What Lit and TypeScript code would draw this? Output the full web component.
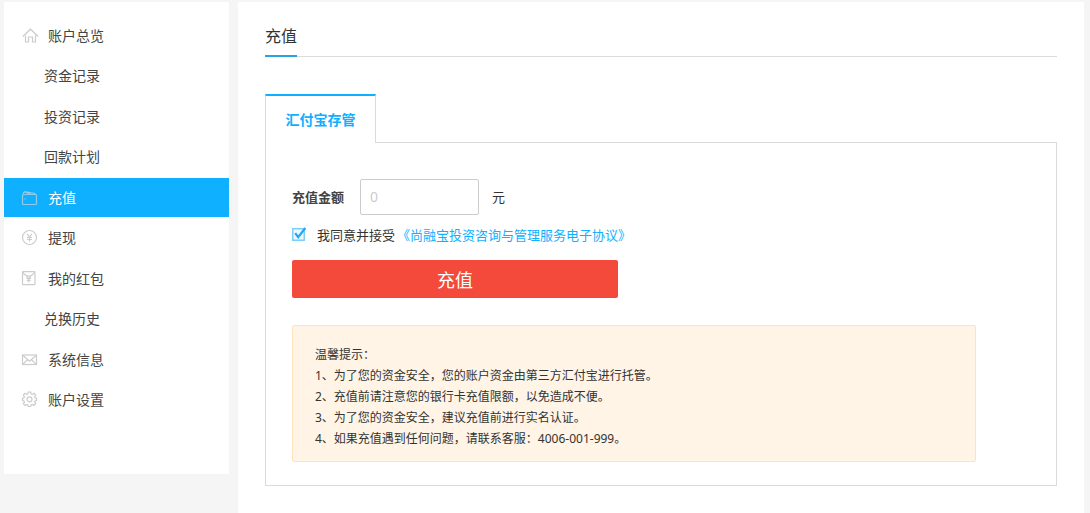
import { LitElement, html, css, svg, nothing } from "lit";
import { customElement, property, state } from "lit/decorators.js";
import { classMap } from "lit/directives/class-map.js";

const icons: Record<string, unknown> = {
  home: svg`<path d="M0.800 9.500 8.500 2.200 16.200 9.500"/><path d="M3.500 8.500v6.500h3v-5h4v5h3V8.500"/>`,
  wallet: svg`<rect x="0.500" y="5.500" width="14" height="10" rx="1"/><path d="M1.500 5.200V3.700l1.200-1L13 4.400v1M3 3.200l6 2"/><path d="M2.500 10h1.500"/>`,
  yuan: svg`<circle cx="7.500" cy="8.500" r="7"/><path d="M5.200 4.800 7.500 8 9.800 4.800M7.500 8v4.600M5 8.500h5M5 10.500h5"/>`,
  packet: svg`<rect x="0.500" y="1.700" width="12.500" height="13" rx="0.800"/><path d="M1 2.200c1.200 2.600 3 3.800 5.700 3.800s4.500-1.200 5.700-3.800M4.600 6.500l2.100 2.200 2.100-2.200M6.700 8.700v3.800M4.500 8.700h4.400M4.700 10.500h4"/>`,
  mail: svg`<rect x="0.500" y="4" width="14" height="9.500"/><path d="M1 4.500l6.500 5.800L14 4.500M1 13.100l4.400-4.300M14 13.100 9.600 8.800"/>`,
  gear: svg`<path d="M6.300 1h2.400l.4 1.900 1.200.5 1.700-1.100 1.700 1.700-1.100 1.700.5 1.200 1.400.3v2.400l-1.400.4-.5 1.200 1.100 1.600-1.700 1.700-1.700-1.100-1.200.5-.4 1.600H6.300l-.4-1.600-1.200-.5L3 14.500l-1.700-1.700 1.100-1.600-.5-1.200-1.400-.4V7.200l1.400-.3.5-1.200L1.300 4 3 2.300l1.700 1.100 1.200-.5z"/><circle cx="7.500" cy="8.300" r="2.500"/>`,
};

interface Entry {
  label: string;
  icon?: string;
}

const entries: Entry[] = [
  { label: "账户总览", icon: "home" },
  { label: "资金记录" },
  { label: "投资记录" },
  { label: "回款计划" },
  { label: "充值", icon: "wallet" },
  { label: "提现", icon: "yuan" },
  { label: "我的红包", icon: "packet" },
  { label: "兑换历史" },
  { label: "系统信息", icon: "mail" },
  { label: "账户设置", icon: "gear" },
];

@customElement("side-menu")
export class SideMenu extends LitElement {
  @property() current = "";

  static styles = css`
    :host {
      display: block;
      background: #fff;
      padding: 14px 0 54px;
    }
    .list {
      display: flex;
      flex-direction: column;
      justify-content: space-between;
      min-height: 404px;
      margin: 0;
      padding: 0;
      list-style: none;
    }
    .item {
      box-sizing: border-box;
      display: flex;
      align-items: center;
      gap: 10px;
      height: 39px;
      padding: 0 0 2px 18px;
      font-size: 14px;
      color: #444;
      text-decoration: none;
    }
    .sub {
      padding-left: 40px;
    }
    .active {
      background: #0fb0ff;
      color: #fff;
    }
    .icon {
      width: 16px;
      height: 16px;
      overflow: visible;
      fill: none;
      stroke: #ccc;
      stroke-width: 1.2;
    }
    .active .icon {
      stroke: #8fcbe8;
    }
  `;

  render() {
    return html`
      <nav>
        <ul class="list">
          ${entries.map(
            (e) => html`<li>
              <a
                href="#"
                class=${classMap({ item: true, sub: !e.icon, active: e.label === this.current })}
                aria-current=${e.label === this.current ? "page" : nothing}
                >${e.icon
                  ? html`<svg class="icon" viewBox="0 0 16 16" aria-hidden="true">${icons[e.icon]}</svg>`
                  : nothing}<span>${e.label}</span></a
              >
            </li>`
          )}
        </ul>
      </nav>
    `;
  }
}

@customElement("recharge-form")
export class RechargeForm extends LitElement {
  @state() private agreed = true;

  static styles = css`
    :host {
      display: block;
      font-size: 13px;
      color: #333;
    }
    .form {
      display: flex;
      flex-direction: column;
      align-items: flex-start;
    }
    .row {
      display: flex;
      align-items: center;
      flex-wrap: wrap;
    }
    .label,
    .unit {
      padding-bottom: 2px;
    }
    .label {
      font-weight: bold;
      color: #444;
      margin-right: 16px;
    }
    .amount {
      box-sizing: border-box;
      width: 119px;
      height: 36px;
      padding: 0 9px 2px;
      border: 1px solid #ccc;
      border-radius: 2px;
      background: #fff;
      font: inherit;
      font-size: 14px;
      color: #333;
      margin-right: 13px;
    }
    .amount::placeholder {
      color: #ccc;
    }
    .agree {
      height: 38px;
    }
    .check {
      display: grid;
      margin-right: 10px;
    }
    .box,
    .tick {
      grid-area: 1 / 1;
      width: 15px;
      height: 15px;
      margin: 0;
    }
    .box {
      appearance: none;
    }
    .tick {
      pointer-events: none;
      fill: none;
    }
    .link {
      color: #0fb0ff;
      text-decoration: none;
      margin-left: 2px;
    }
    .submit {
      width: 326px;
      max-width: 100%;
      height: 38px;
      margin-top: 7px;
      border: 0;
      border-radius: 2px;
      background: #f34a3c;
      color: #fff;
      font: inherit;
      font-size: 18px;
      cursor: pointer;
    }
    .notice {
      margin: 27px 54px 0 0;
      padding: 18px 22px 12px;
      border: 1px solid #ffe2b9;
      border-radius: 2px;
      background: #fff4e5;
      font-size: 12px;
      line-height: 21px;
    }
    .line {
      margin: 0;
    }
  `;

  render() {
    return html`
      <form class="form" @submit=${(e: Event) => e.preventDefault()}>
        <div class="row">
          <label class="label" for="amount">充值金额</label>
          <input class="amount" id="amount" type="text" inputmode="decimal" placeholder="0" />
          <span class="unit">元</span>
        </div>
        <div class="row agree">
          <span class="check">
            <input
              class="box"
              id="agree"
              type="checkbox"
              .checked=${this.agreed}
              @change=${(e: Event) => (this.agreed = (e.target as HTMLInputElement).checked)}
            />
            <svg class="tick" viewBox="0 0 15 15" aria-hidden="true">
              <rect x="0.750" y="1.750" width="11.500" height="11.500" stroke="#7dcff8" stroke-width="1.500" fill="#edf8fe" />
              ${this.agreed
                ? svg`<path d="M3.200 6.200 6.200 10.200 13.300 1" stroke="#1fa9ee" stroke-width="2.200"/>`
                : nothing}
            </svg>
          </span>
          <label for="agree">我同意并接受</label>
          <a class="link" href="#">《尚融宝投资咨询与管理服务电子协议》</a>
        </div>
        <button class="submit" type="submit">充值</button>
      </form>
      <div class="notice">
        <p class="line">温馨提示：</p>
        <p class="line">1、为了您的资金安全，您的账户资金由第三方汇付宝进行托管。</p>
        <p class="line">2、充值前请注意您的银行卡充值限额，以免造成不便。</p>
        <p class="line">3、为了您的资金安全，建议充值前进行实名认证。</p>
        <p class="line">4、如果充值遇到任何问题，请联系客服：4006-001-999。</p>
      </div>
    `;
  }
}

@customElement("app-root")
export class AppRoot extends LitElement {
  static styles = css`
    :host {
      display: grid;
      grid-template-columns: 225px minmax(0, 1fr);
      gap: 9px;
      box-sizing: border-box;
      min-height: 100vh;
      padding: 2px 6px 0 4px;
      background: #f5f5f5;
      font-family: "Noto Sans", "Noto Sans CJK SC", sans-serif;
    }
    .menu {
      align-self: start;
    }
    .main {
      background: #fff;
      padding: 15px 27px 27px;
    }
    .head {
      display: flex;
      border-bottom: 1px solid #dbdbdb;
    }
    .title {
      margin: 0 0 -1px;
      border-bottom: 2px solid #25a4e0;
      font-size: 16px;
      font-weight: normal;
      line-height: 38px;
      color: #333;
    }
    .tabs {
      display: flex;
      margin-top: 37px;
    }
    .tab {
      min-width: 111px;
      margin-bottom: -1px;
      padding: 0 19px;
      border: solid #dbdbdb;
      border-width: 2px 1px 0;
      border-top-color: #0fb0ff;
      background: #fff;
      color: #0fb0ff;
      font: inherit;
      font-size: 14px;
      font-weight: bold;
      line-height: 47px;
      z-index: 1;
    }
    .panel {
      border: 1px solid #dbdbdb;
      padding: 36px 26px 23px;
    }
  `;

  render() {
    return html`
      <side-menu class="menu" current="充值"></side-menu>
      <main class="main">
        <header class="head"><h1 class="title">充值</h1></header>
        <div class="tabs" role="tablist">
          <button class="tab" role="tab" aria-selected="true">汇付宝存管</button>
        </div>
        <section class="panel" role="tabpanel">
          <recharge-form></recharge-form>
        </section>
      </main>
    `;
  }
}
